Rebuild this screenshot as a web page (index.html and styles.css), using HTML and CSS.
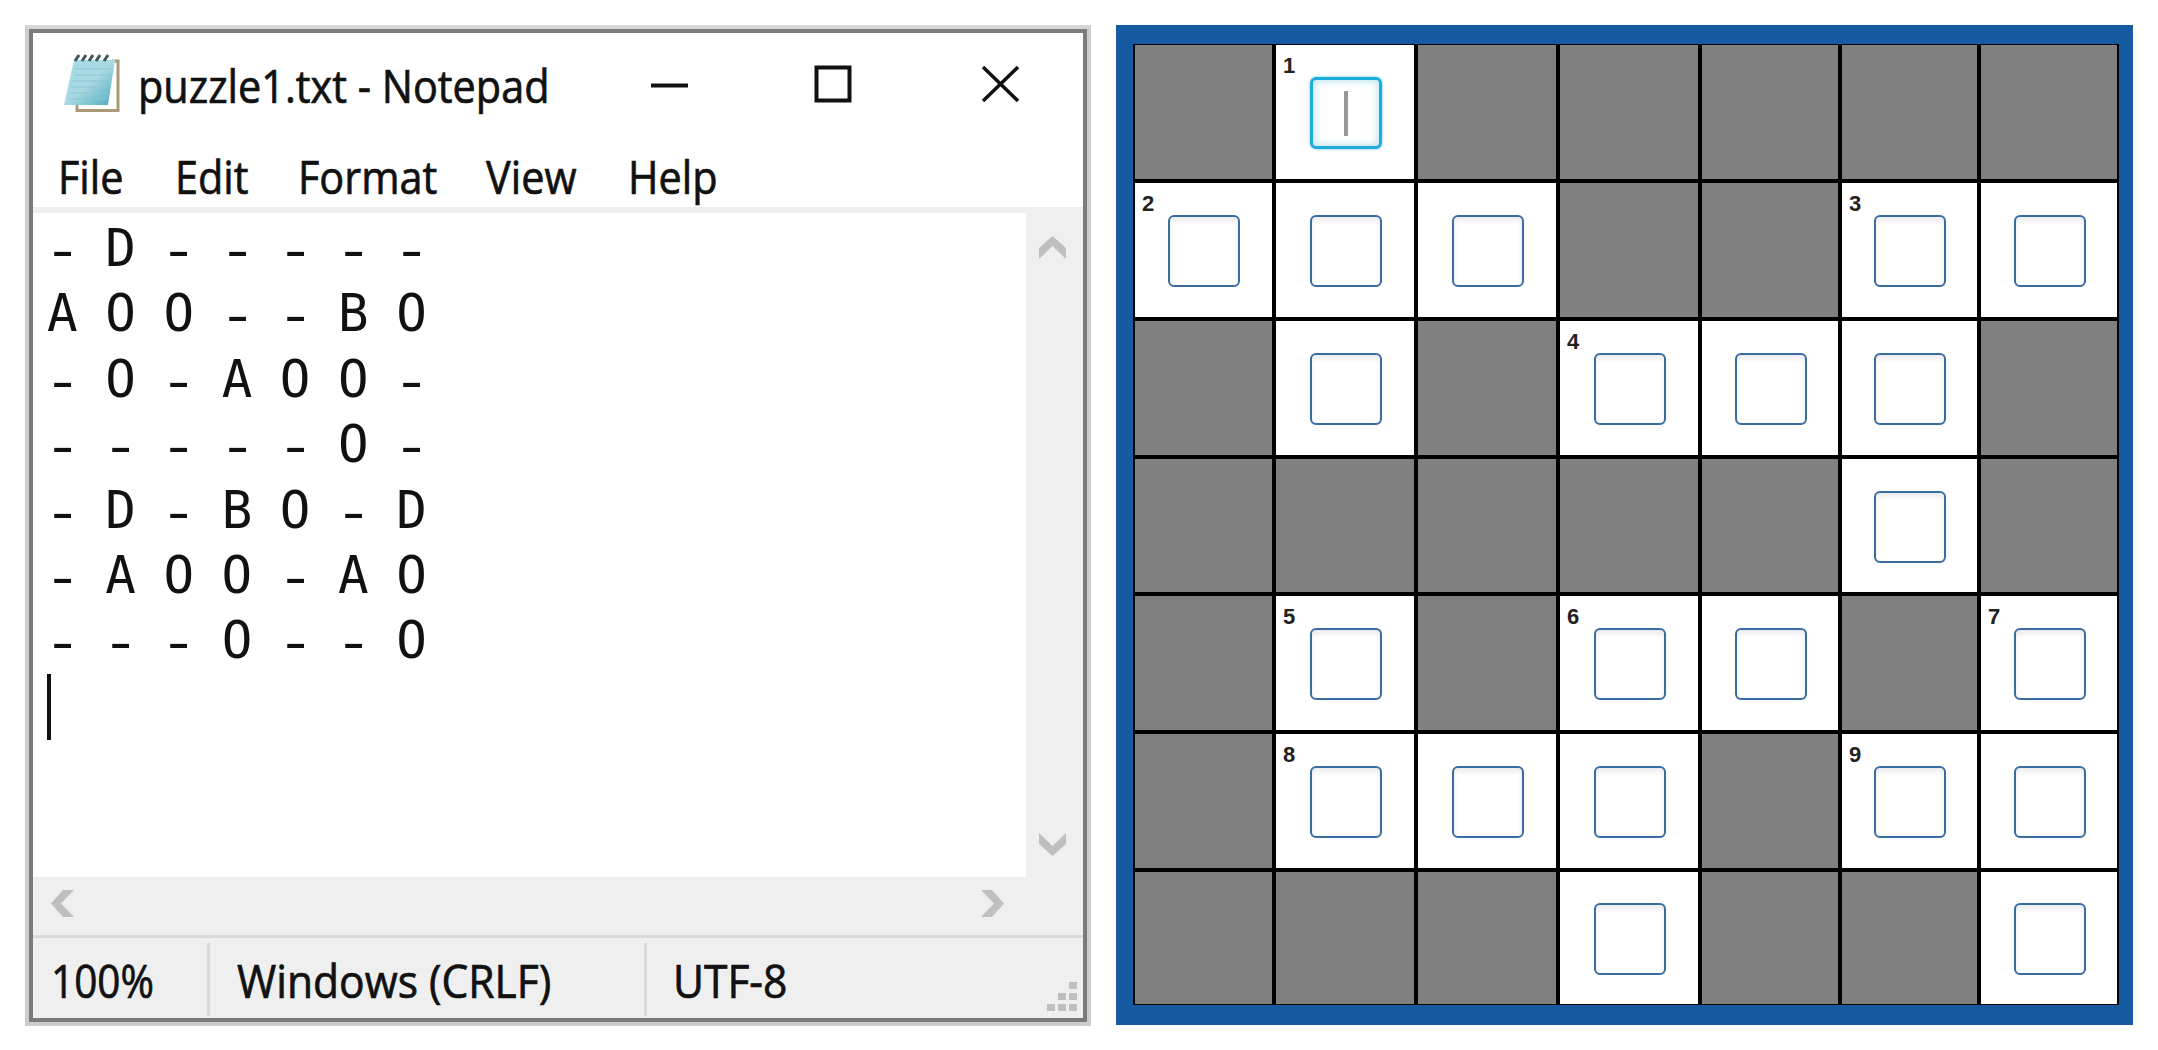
FILE: index.html
```html
<!DOCTYPE html>
<html lang="en">
<head>
<meta charset="utf-8">
<title>Crossword puzzle</title>
<link rel="stylesheet" href="styles.css">
</head>
<body>
<main class="stage">
  <section class="window">
    <header class="titlebar">
      <svg class="app-icon" viewBox="0 0 58 60">
        <defs><linearGradient id="pad" x1="0" y1="0" x2="1" y2="1"><stop offset="0" stop-color="#a5dbe7"/><stop offset=".5" stop-color="#a9d9e3"/><stop offset="1" stop-color="#4ba9bd"/></linearGradient></defs>
        <path d="M49 8H55V57.500H14V51" fill="#fff" stroke="#a89a76" stroke-width="3"/>
        <path d="M11 7H52L45 52H1Z" fill="url(#pad)"/>
        <path d="M12 16H48M11 22H47M10 28H46M8 34H46M7 40H45M6 46H44" stroke="#8cc6d3" stroke-width="1.2"/>
        <path d="M12 8L16 2M19 8L23 2M26 8L30 2M33 8L37 2M41 8L45 2" stroke="#3f575e" stroke-width="3"/>
      </svg>
      <h1 class="title"><span class="fit">puzzle1.txt - Notepad</span></h1>
      <svg class="controls" viewBox="0 0 370 38"><g fill="none" stroke="#111" stroke-width="4"><path d="M0 20.5H37"/><rect x="165.500" y="2.500" width="33" height="33"/><path d="M332 2L367 36M367 2L332 36" stroke-width="3.500"/></g></svg>
    </header>
    <nav class="menu">
      <span class="file"><span class="fit">File</span></span><span class="edit"><span class="fit">Edit</span></span><span class="format"><span class="fit">Format</span></span><span class="view"><span class="fit">View</span></span><span class="fit">Help</span>
    </nav>
    <div class="editor">
      <pre class="text"><i>-</i> D <i>-</i> <i>-</i> <i>-</i> <i>-</i> <i>-</i>
A O O <i>-</i> <i>-</i> B O
<i>-</i> O <i>-</i> A O O <i>-</i>
<i>-</i> <i>-</i> <i>-</i> <i>-</i> <i>-</i> O <i>-</i>
<i>-</i> D <i>-</i> B O <i>-</i> D
<i>-</i> A O O <i>-</i> A O
<i>-</i> <i>-</i> <i>-</i> O <i>-</i> <i>-</i> O
<b class="caret"></b></pre>
      <div class="vscroll">
        <svg width="27" height="23" viewBox="0 0 27 23"><path d="M0 12L13.500 0L27 12V23L13.500 10L0 23Z"/></svg>
        <svg width="27" height="23" viewBox="0 0 27 23"><path d="M0 0L13.500 13L27 0V11L13.500 23L0 11Z"/></svg>
      </div>
    </div>
    <div class="hscroll">
      <svg width="23" height="27" viewBox="0 0 23 27"><path d="M12 0H23L10 13.500L23 27H12L0 13.500Z"/></svg>
      <svg width="23" height="27" viewBox="0 0 23 27"><path d="M0 0H11L23 13.500L11 27H0L13 13.500Z"/></svg>
    </div>
    <footer class="status">
      <div class="zoom"><span class="fit fit-zoom">100%</span></div><div class="eol"><span class="fit fit-eol">Windows (CRLF)</span></div><div class="enc"><span class="fit fit-eol">UTF-8</span></div>
      <svg class="grip" width="30" height="30" viewBox="0 0 30 30"><path d="M22 0h8v7h-8zM11 11h8v7h-8zM22 11h8v7h-8zM0 22h8v7h-8zM11 22h8v7h-8zM22 22h8v7h-8z"/></svg>
    </footer>
  </section>
  <section class="board">
    <div class="grid">
      <div class="cell"></div><div class="cell open"><b>1</b><i class="box focus"></i></div><div class="cell"></div><div class="cell"></div><div class="cell"></div><div class="cell"></div><div class="cell"></div>
      <div class="cell open"><b>2</b><i class="box"></i></div><div class="cell open"><i class="box"></i></div><div class="cell open"><i class="box"></i></div><div class="cell"></div><div class="cell"></div><div class="cell open"><b>3</b><i class="box"></i></div><div class="cell open"><i class="box"></i></div>
      <div class="cell"></div><div class="cell open"><i class="box"></i></div><div class="cell"></div><div class="cell open"><b>4</b><i class="box"></i></div><div class="cell open"><i class="box"></i></div><div class="cell open"><i class="box"></i></div><div class="cell"></div>
      <div class="cell"></div><div class="cell"></div><div class="cell"></div><div class="cell"></div><div class="cell"></div><div class="cell open"><i class="box"></i></div><div class="cell"></div>
      <div class="cell"></div><div class="cell open"><b>5</b><i class="box"></i></div><div class="cell"></div><div class="cell open"><b>6</b><i class="box"></i></div><div class="cell open"><i class="box"></i></div><div class="cell"></div><div class="cell open"><b>7</b><i class="box"></i></div>
      <div class="cell"></div><div class="cell open"><b>8</b><i class="box"></i></div><div class="cell open"><i class="box"></i></div><div class="cell open"><i class="box"></i></div><div class="cell"></div><div class="cell open"><b>9</b><i class="box"></i></div><div class="cell open"><i class="box"></i></div>
      <div class="cell"></div><div class="cell"></div><div class="cell"></div><div class="cell open"><i class="box"></i></div><div class="cell"></div><div class="cell"></div><div class="cell open"><i class="box"></i></div>
    </div>
  </section>
</main>
</body>
</html>
```
FILE: styles.css
```css
* { box-sizing: border-box; }
body { margin: 0; background: #fff; color: #111; font-family: "Open Sans", "Noto Sans", sans-serif; }
.stage { display: flex; gap: 25px; width: 2158px; height: 1050px; padding: 25px; }
.window { width: 1066px; height: 1001px; border: 4px solid #cdcdcd; border-top-color: #d6d6d6; outline: 4px solid #7b7b7b; outline-offset: -8px; padding: 4px; background: #fff; display: flex; flex-direction: column; }
.titlebar { height: 108px; display: flex; align-items: flex-start; padding-left: 30px; }
.app-icon { width: 58px; height: 60px; margin-top: 20px; flex: none; }
.title { margin: 22px 0 0 17px; width: 513px; font-size: 45px; line-height: 62px; font-weight: 400; white-space: nowrap; }
.controls { width: 370px; height: 38px; margin-top: 32px; flex: none; }
.menu { height: 72px; border-bottom: 6px solid #efefef; display: flex; font-size: 45px; line-height: 62px; padding: 5px 0 0 25px; white-space: nowrap; }
.menu > span { flex: none; }
.fit { display: inline-block; transform: scaleX(.92); transform-origin: left; -webkit-text-stroke: .7px #111; }
.fit-zoom { transform: scaleX(.9); }
.fit-eol { transform: scaleX(.945); }
.file { width: 117px; } .edit { width: 123px; } .format { width: 188px; } .view { width: 142px; }
.editor { height: 664px; display: flex; }
.text { margin: 0; width: 993px; padding: 3px 0 0 14px; font: 50.8px/65.4px "DejaVu Sans Mono", monospace; letter-spacing: -1.48px; color: #111; }
.text i { display: inline-block; font-style: normal; line-height: 1; transform: translateY(2px) scaleX(1.3); }
.caret { display: inline-block; width: 4px; height: 66px; background: #111; vertical-align: top; }
.vscroll { flex: 1; background: #efefef; display: flex; flex-direction: column; justify-content: space-between; padding: 23px 0 21px 13px; }
svg { display: block; }
.vscroll path, .hscroll path, .grip path { fill: #bfbfbf; }
.hscroll { height: 58px; background: #efefef; display: flex; justify-content: space-between; padding: 13px 79px 0 18px; }
.status { flex: 1; background: #efefef; border-top: 3px solid #d9d9d9; display: flex; font-size: 45px; line-height: 62px; padding-top: 5px; white-space: nowrap; }
.status > div { height: 73px; padding-top: 7px; flex: none; }
.zoom { width: 174px; padding-left: 18px; }
.eol { width: 437px; padding-left: 27px; border-left: 3px solid #d9d9d9; }
.enc { width: 403px; padding-left: 26px; border-left: 3px solid #d9d9d9; }
.grip { margin-top: 39px; }
.board { width: 1017px; height: 1000px; background: #165aa1; padding: 19px 14px 20px 17px; }
.grid { width: 986px; height: 961px; background: #000; padding: 1px 2px; display: grid; grid-template-columns: 137px 138px 138px 138px 136px 135px 136px; gap: 4px; grid-template-rows: 134px 134px 134px 133px 134px 134px 132px; }
.cell { background: #808080; display: grid; place-items: center; position: relative; }
.open { background: #fff; }
.cell b { position: absolute; left: 7px; top: 9px; font: bold 22px/24px "Liberation Sans", Arial, sans-serif; color: #222; }
.box { width: 72px; height: 72px; margin: 2px 0 0 1px; border: 2px solid #386ca3; border-radius: 6px; box-shadow: inset 0 4px 5px #ececef; display: grid; place-items: center; }
.focus { border: 3px solid #1fabdc; box-shadow: inset 0 0 6px 2px #bfe5f3, 0 0 3px #6bcbed; }
.focus::before { content: ""; width: 4px; height: 45px; background: #999; }
```
